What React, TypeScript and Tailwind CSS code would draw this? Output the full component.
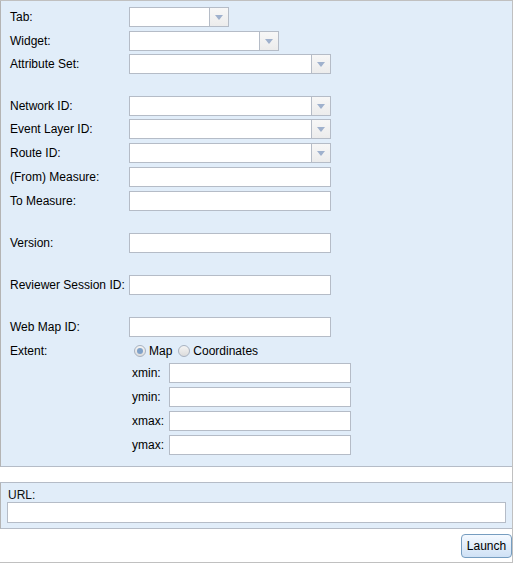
import React from 'react'

const inputCls = 'h-[20px] bg-white border border-[#b5bcc7] box-border shrink-0'

function Select({ width }: { width: number }) {
  return (
    <div className={`${inputCls} flex`} style={{ width }}>
      <div className="flex-1" />
      <div className="w-[19px] h-full border-l border-[#b5bcc7] bg-gradient-to-b from-[#f7f7f7] to-[#ececec] flex items-center justify-center">
        <svg width="8" height="5" viewBox="0 0 8 5">
          <path d="M0 0h8L4 5z" fill="#9fb1cd" />
        </svg>
      </div>
    </div>
  )
}

function Row({ label, children, mt }: { label: string; children: React.ReactNode; mt: string }) {
  return (
    <div className={`flex items-center h-[20px] ${mt}`}>
      <div className="w-[128px] shrink-0 pl-[9px] whitespace-nowrap">{label}</div>
      {children}
    </div>
  )
}

function Text({ width = 202 }: { width?: number }) {
  return <div className={inputCls} style={{ width }} />
}

function Radio({ checked }: { checked?: boolean }) {
  return (
    <span className="w-[12px] h-[12px] rounded-full border border-[#a8b2c0] bg-gradient-to-b from-[#f4f4f4] to-[#dcdcdc] flex items-center justify-center">
      {checked && <span className="w-[6px] h-[6px] rounded-full bg-[#7fa1c8]" />}
    </span>
  )
}

function ExtentRow({ label, mt }: { label: string; mt: string }) {
  return (
    <div className={`flex items-center h-[20px] ${mt}`}>
      <div className="w-[128px] shrink-0" />
      <div className="w-[40px] shrink-0 pl-[3px]">{label}</div>
      <div className={inputCls} style={{ width: 182 }} />
    </div>
  )
}

export default function App() {
  return (
    <div
      className="w-[513px] h-[563px] flex flex-col bg-white border-t border-r border-b border-[#c0c0c0] text-[12px] text-black"
      style={{ fontFamily: '"Liberation Sans", Arial, sans-serif' }}
    >
      <div className="bg-[#e1edf9] border-l border-[#b4b4b4] border-b border-b-[#b5bcc7] pt-[6px] pb-[11px]">
        <Row label="Tab:" mt="">
          <Select width={100} />
        </Row>
        <Row label="Widget:" mt="mt-[4px]">
          <Select width={150} />
        </Row>
        <Row label="Attribute Set:" mt="mt-[3px]">
          <Select width={202} />
        </Row>
        <Row label="Network ID:" mt="mt-[22px]">
          <Select width={202} />
        </Row>
        <Row label="Event Layer ID:" mt="mt-[3px]">
          <Select width={202} />
        </Row>
        <Row label="Route ID:" mt="mt-[4px]">
          <Select width={202} />
        </Row>
        <Row label="(From) Measure:" mt="mt-[4px]">
          <Text />
        </Row>
        <Row label="To Measure:" mt="mt-[4px]">
          <Text />
        </Row>
        <Row label="Version:" mt="mt-[22px]">
          <Text />
        </Row>
        <Row label="Reviewer Session ID:" mt="mt-[22px]">
          <Text />
        </Row>
        <Row label="Web Map ID:" mt="mt-[22px]">
          <Text />
        </Row>
        <Row label="Extent:" mt="mt-[4px]">
          <div className="flex items-center pl-[5px]">
            <Radio checked />
            <span className="ml-[3px] mr-[6px]">Map</span>
            <Radio />
            <span className="ml-[3px]">Coordinates</span>
          </div>
        </Row>
        <ExtentRow label="xmin:" mt="mt-[2px]" />
        <ExtentRow label="ymin:" mt="mt-[4px]" />
        <ExtentRow label="xmax:" mt="mt-[4px]" />
        <ExtentRow label="ymax:" mt="mt-[4px]" />
      </div>
      <div className="h-[16px] bg-white border-b border-[#b5bcc7]" />
      <div className="bg-[#e1edf9] border-l border-[#b4b4b4] border-b border-b-[#b5bcc7] px-[6px] pt-[5px] pb-[5px]">
        <div className="h-[14px] leading-[14px] pl-[1px] text-[#101010]">URL:</div>
        <div className="h-[21px] bg-white border border-[#b5bcc7]" />
      </div>
      <div className="flex-1 flex justify-end items-start pt-[5px]">
        <button className="h-[24px] w-[51px] rounded-[4px] border border-[#769dc0] bg-gradient-to-b from-[#f4f9ff] to-[#cfe1f5] text-[12px] text-black">
          Launch
        </button>
      </div>
    </div>
  )
}
